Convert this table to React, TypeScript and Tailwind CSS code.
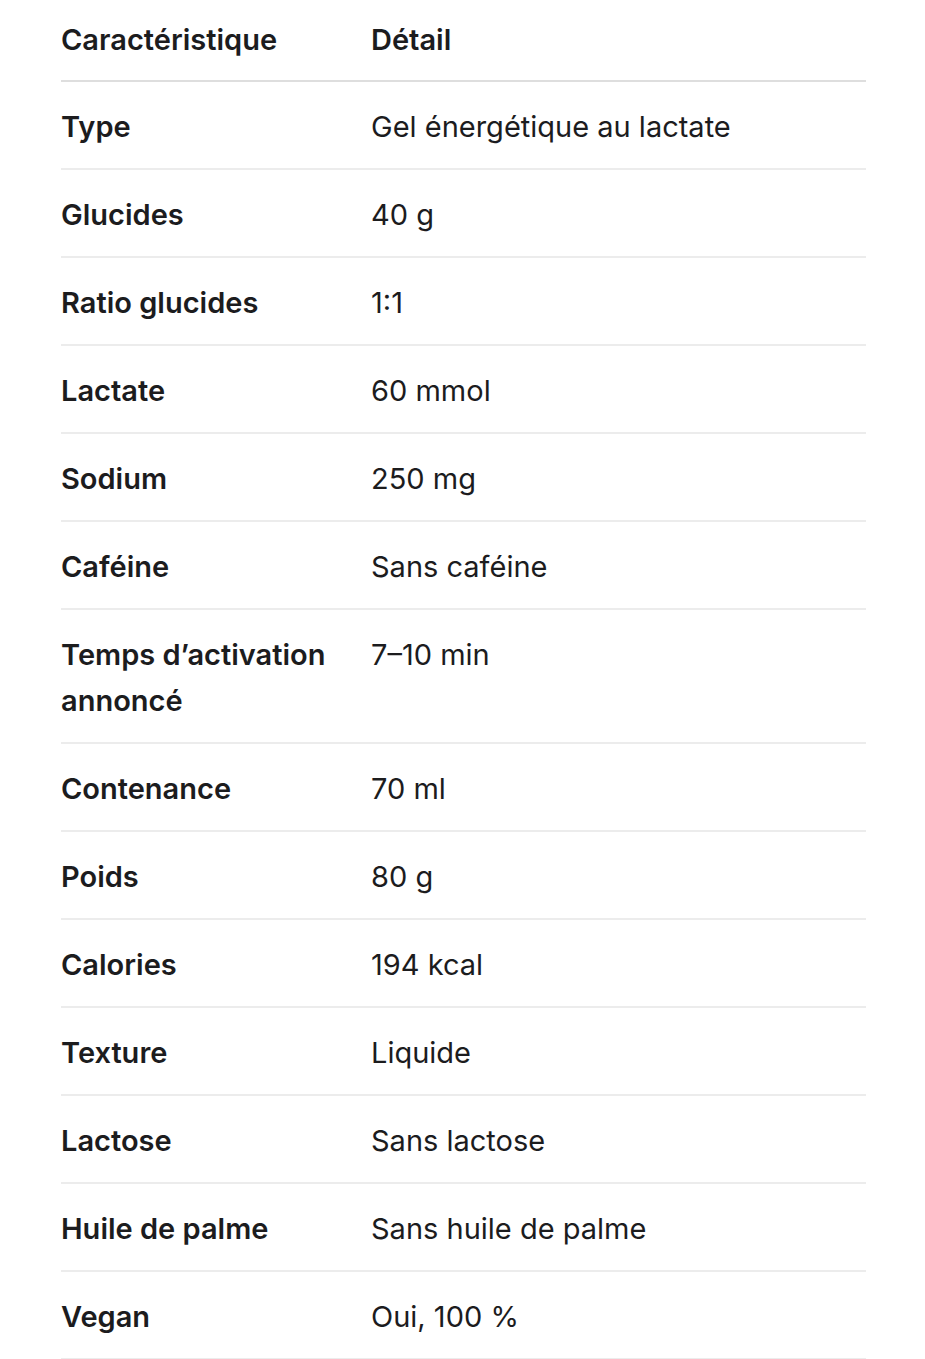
const ROWS: [string, string][] = [
  ["Type", "Gel énergétique au lactate"],
  ["Glucides", "40 g"],
  ["Ratio glucides", "1:1"],
  ["Lactate", "60 mmol"],
  ["Sodium", "250 mg"],
  ["Caféine", "Sans caféine"],
  ["Temps d’activation annoncé", "7–10 min"],
  ["Contenance", "70 ml"],
  ["Poids", "80 g"],
  ["Calories", "194 kcal"],
  ["Texture", "Liquide"],
  ["Lactose", "Sans lactose"],
  ["Huile de palme", "Sans huile de palme"],
  ["Vegan", "Oui, 100 %"],
];

export default function App() {
  return (
    <div
      className="min-h-screen bg-white text-[#1c1c1e] px-[61px]"
      style={{ fontFamily: "Inter, 'Noto Sans', 'Liberation Sans', sans-serif" }}
    >
      <table className="w-[805px] border-collapse table-fixed text-[29px] leading-[46px] text-left">
        <colgroup>
          <col className="w-[310px]" />
          <col />
        </colgroup>
        <thead>
          <tr className="border-b-2 border-[#dedede]">
            <th className="pt-[17px] pb-[17px] pr-3 font-semibold">Caractéristique</th>
            <th className="pt-[17px] pb-[17px] font-semibold">Détail</th>
          </tr>
        </thead>
        <tbody>
          {ROWS.map(([k, v]) => (
            <tr key={k} className="border-b-2 border-[#ececec]">
              <td className="pt-[22px] pb-[18px] pr-3 align-top font-semibold">{k}</td>
              <td className="pt-[22px] pb-[18px] align-top font-normal">{v}</td>
            </tr>
          ))}
        </tbody>
      </table>
    </div>
  );
}
